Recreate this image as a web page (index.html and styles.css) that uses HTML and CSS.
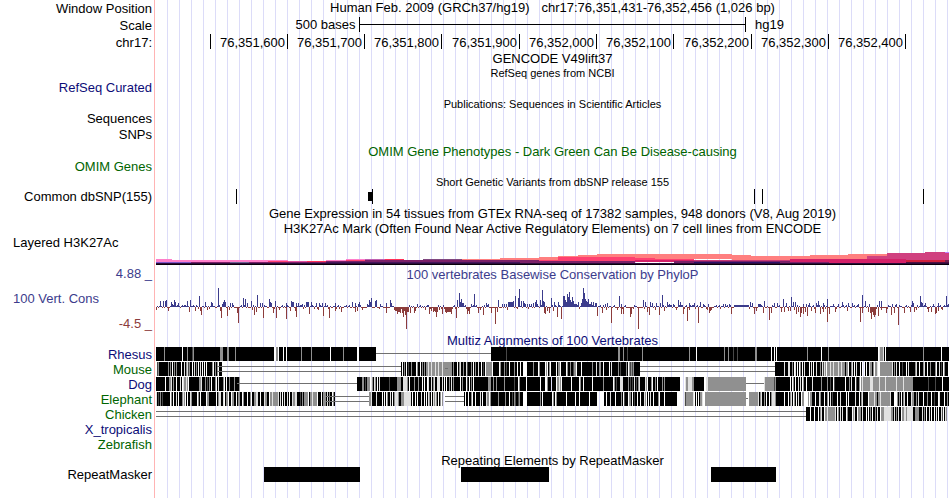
FILE: index.html
```html
<!DOCTYPE html>
<html lang="en">
<head>
  <meta charset="UTF-8">
  <title>Human chr17:76,351,431-76,352,456</title>
  <link rel="stylesheet" href="styles.css">
</head>
<body>
  <div class="browser">
    <div class="row position">
      <div class="label">Window Position</div>
      <div class="title"><span>Human Feb. 2009 (GRCh37/hg19)</span><span>chr17:76,351,431-76,352,456 (1,026 bp)</span></div>
    </div>
    <div class="row ruler">
      <div class="label">Scale</div>
      <svg class="plot" viewBox="156 0 793 17">
        <text x="355.5" y="12" text-anchor="end">500 bases</text>
        <path d="M359 0h1v7h385v-7h1v15h-1v-7h-385v7h-1z"/>
        <text x="755" y="12">hg19</text>
      </svg>
    </div>
    <div class="row ruler">
      <div class="label">chr17:</div>
      <svg class="plot" id="ruler" viewBox="156 0 793 17"></svg>
    </div>
    <div class="row"><div class="title">GENCODE V49lift37</div></div>
    <div class="row small h14"><div class="title">RefSeq genes from NCBI</div></div>
    <div class="row"><div class="label navy">RefSeq Curated</div></div>
    <div class="row small h16"><div class="title">Publications: Sequences in Scientific Articles</div></div>
    <div class="row"><div class="label">Sequences</div></div>
    <div class="row h16"><div class="label">SNPs</div></div>
    <div class="row h17"><div class="title green">OMIM Gene Phenotypes - Dark Green Can Be Disease-causing</div></div>
    <div class="row h14"><div class="label green">OMIM Genes</div></div>
    <div class="row small h16"><div class="title">Short Genetic Variants from dbSNP release 155</div></div>
    <div class="row">
      <div class="label">Common dbSNP(155)</div>
      <svg class="plot" viewBox="156 0 793 15">
        <path d="M236 0h1v15h-1zM368 3h4v-3h1v15h-1v-3h-4zM754 0h1v15h-1zM762 0h1v15h-1zM923 0h1v15h-1z"/>
      </svg>
    </div>
    <div class="row h17"><div class="title">Gene Expression in 54 tissues from GTEx RNA-seq of 17382 samples, 948 donors (V8, Aug 2019)</div></div>
    <div class="row"><div class="title">H3K27Ac Mark (Often Found Near Active Regulatory Elements) on 7 cell lines from ENCODE</div></div>
    <div class="row layered">
      <div class="label left">Layered H3K27Ac</div>
      <svg class="plot" id="h3k27ac" viewBox="156 236 793 29"></svg>
    </div>
    <div class="row cons">
      <div class="label axis">
        <span class="blue">4.88 _</span>
        <span class="blue left">100 Vert. Cons</span>
        <span class="red">-4.5 _</span>
      </div>
      <div class="cons-body">
        <div class="title blue">100 vertebrates Basewise Conservation by PhyloP</div>
        <svg class="plot" id="phylop" viewBox="156 282 793 51"></svg>
      </div>
    </div>
    <div class="row multiz"><div class="title navy">Multiz Alignments of 100 Vertebrates</div></div>
    <div class="row"><div class="label navy">Rhesus</div><svg class="plot" id="rhesus" viewBox="156 0 793 15"></svg></div>
    <div class="row"><div class="label green">Mouse</div><svg class="plot" id="mouse" viewBox="156 0 793 15"></svg></div>
    <div class="row"><div class="label navy">Dog</div><svg class="plot" id="dog" viewBox="156 0 793 15"></svg></div>
    <div class="row"><div class="label green">Elephant</div><svg class="plot" id="elephant" viewBox="156 0 793 15"></svg></div>
    <div class="row"><div class="label green">Chicken</div><svg class="plot" id="chicken" viewBox="156 0 793 15"></svg></div>
    <div class="row"><div class="label navy">X_tropicalis</div></div>
    <div class="row"><div class="label green">Zebrafish</div></div>
    <div class="row repeats"><div class="title">Repeating Elements by RepeatMasker</div></div>
    <div class="row">
      <div class="label">RepeatMasker</div>
      <svg class="plot" viewBox="156 0 793 15">
        <path d="M264 0h96v15h-96zM461 0h88v15h-88zM711 0h65v15h-65z"/>
      </svg>
    </div>
  </div>
  <script src="tracks.js"></script>
</body>
</html>
```

FILE: styles.css
```css
body {
  margin: 0;
  background: #fff;
  color: #000;
  font-family: "Liberation Sans", Arial, sans-serif;
  font-size: 13px;
  line-height: 15px;
}

.browser {
  width: 950px;
  height: 498px;
  overflow: hidden;
  /* red edge between labels and data, then a guide every 12px */
  background:
    linear-gradient(#ffb4b4, #ffb4b4) 154px 0 / 1px 100% no-repeat,
    repeating-linear-gradient(90deg, transparent 0 11px, #dcdcf8 11px 12px) 156px 0 / 794px 100% no-repeat;
}

.row {
  display: grid;
  grid-template-columns: 152px 793px;
  column-gap: 4px;
  height: 15px;
  align-items: end;
  white-space: nowrap;
}

.label {
  grid-column: 1;
  text-align: right;
}

.title,
.plot,
.cons-body {
  grid-column: 2;
}

.title {
  text-align: center;
}

.plot {
  display: block;
  width: 793px;
  height: 15px;
  shape-rendering: crispEdges;
}

.h14 { height: 14px; }
.h16 { height: 16px; }
.h17 { height: 17px; }

.small {
  box-sizing: border-box;
  padding-bottom: 1px;
  font-size: 11px;
  line-height: 12px;
}

.position {
  height: 17px;
  align-items: start;
}

.position .label,
.ruler .label {
  padding-top: 1px;
}

.position .title span + span {
  margin-left: 12px;
}

.ruler {
  height: 17px;
  align-items: start;
}

.ruler .plot {
  height: 17px;
}

.left {
  text-align: left;
  padding-left: 13px;
}

.layered {
  height: 29px;
  align-items: start;
}

.layered .label {
  margin-top: -1px;
}

.layered .plot {
  height: 29px;
}

.cons {
  height: 68px;
  align-items: start;
}

.axis {
  display: flex;
  flex-direction: column;
  gap: 10px;
  padding-top: 1px;
}

.cons-body {
  padding-top: 2px;
}

.cons-body .plot {
  height: 51px;
}

.multiz,
.repeats {
  height: 14px;
  align-items: start;
}

.repeats {
  padding-top: 1px;
}

.navy { color: #0c0c78; }
.green { color: #006400; }
.blue { color: #3c3c8c; }
.red { color: #8c3c3c; }
```

FILE: tracks.js
```js
const NS = 'http://www.w3.org/2000/svg';

function rect(svg, x, y, w, h, fill) {
  const r = document.createElementNS(NS, 'rect');
  r.setAttribute('x', x);
  r.setAttribute('y', y);
  r.setAttribute('width', w);
  r.setAttribute('height', h);
  r.setAttribute('fill', fill);
  svg.appendChild(r);
}

// ruler: tick every 100 bases, number to the left of its tick
const ruler = document.getElementById('ruler');
[210, 287, 364, 441, 519, 596, 673, 751, 828, 905].forEach((x, i) => {
  rect(ruler, x, 0, 1, 15, '#000');
  if (i === 0) return;
  const t = document.createElementNS(NS, 'text');
  t.setAttribute('x', x - 2);
  t.setAttribute('y', 13);
  t.setAttribute('text-anchor', 'end');
  t.textContent = (76351500 + i * 100).toLocaleString('en-US');
  ruler.appendChild(t);
});

// H3K27Ac layers: x1, x2, top, bottom, colour
const h3k = document.getElementById('h3k27ac');
[
  [156, 172, 259, 262, '#ff7fcb'], [172, 288, 260, 262, '#ff7fcb'],
  [156, 191, 262, 263, '#7d55c8'], [191, 230, 262, 263, '#7b2068'], [230, 249, 262, 263, '#6a6090'],
  [249, 326, 262, 263, '#7b2068'],
  [268, 288, 261, 262, '#ff4070'], [288, 326, 261, 262, '#e050a0'], [307, 326, 261, 262, '#ff3058'],
  [326, 346, 260, 261, '#ff7fcb'], [346, 365, 259, 260, '#ff7fcb'], [346, 385, 260, 261, '#ff4070'],
  [365, 385, 259, 260, '#c060b0'], [385, 404, 259, 260, '#ff3058'],
  [326, 365, 261, 263, '#7b2068'], [365, 423, 260, 263, '#7b2068'],
  [423, 462, 259, 260, '#804880'], [423, 500, 260, 263, '#7b2068'],
  [462, 500, 259, 260, '#ff7f7f'], [500, 539, 258, 261, '#ff7f7f'],
  [500, 539, 260, 263, '#7b2068'], [539, 558, 257, 260, '#ff7f7f'],
  [558, 578, 256, 259, '#ff7f7f'], [578, 597, 255, 258, '#ff7f7f'],
  [597, 732, 254, 259, '#ff7f7f'], [732, 751, 255, 260, '#ff7f7f'],
  [751, 810, 256, 260, '#ff7f7f'], [810, 848, 255, 260, '#ff7f7f'],
  [848, 887, 254, 259, '#ff7f7f'], [887, 906, 253, 255, '#ff7f7f'],
  [539, 558, 260, 262, '#ff4070'], [558, 635, 257, 262, '#ff4070'], [597, 655, 258, 262, '#ff4070'],
  [655, 694, 259, 262, '#ff4070'], [520, 635, 261, 263, '#7b2068'],
  [558, 635, 260, 261, '#ff4070'],
  [635, 732, 260, 262, '#d42068'], [694, 829, 260, 262, '#c83878'], [674, 740, 261, 263, '#7b2068'],
  [732, 829, 261, 263, '#7b2068'], [790, 868, 259, 262, '#d42068'],
  [829, 906, 259, 263, '#d42068'], [867, 887, 256, 259, '#d0407f'], [887, 906, 253, 258, '#d0407f'],
  [868, 906, 257, 259, '#d0407f'], [906, 925, 253, 260, '#d0407f'], [925, 949, 252, 260, '#d0407f'],
  [906, 945, 260, 262, '#d01f3c'], [945, 949, 260, 262, '#702050'], [945, 949, 252, 253, '#c080ff'],
  [906, 949, 262, 263, '#501040'],
  [156, 949, 263, 264, '#2c0b3c'], [326, 520, 262, 263, '#46165c'], [694, 780, 262, 263, '#2c1068'],
  [156, 949, 264, 265, '#080008']
].forEach(([x1, x2, y1, y2, c]) => rect(h3k, x1, y1, x2 - x1, y2 - y1, c));

// PhyloP scores, "x:height"
const gains = `160:6 163:6 165:6 166:7 171:5 172:3 174:7 175:5 178:4 187:6 190:7 199:11 205:5 211:5 212:4
218:19 222:3 223:5 224:7 225:5 230:4 232:4 243:9 245:8 247:4 251:6 257:12 260:4 262:4 269:8 270:5 271:4 275:6
286:4 291:6 292:5 293:5 296:4 298:4 302:3 306:5 307:5 308:5 311:5 316:4 319:4 322:4 325:4 335:4 352:5 355:4
358:3 359:5 367:3 369:7 370:5 371:9 375:6 376:7 380:3 386:4 390:7 391:4 417:3 457:7 459:14 460:5 461:8 462:4
463:4 471:3 474:13 486:4 488:3 498:7 502:3 504:3 506:3 508:5 509:5 510:5 511:5 512:5 513:6 515:11 518:9 519:18
521:6 523:6 524:4 525:3 527:3 529:3 531:3 533:4 535:5 536:7 537:3 540:7 542:17 543:6 544:5 551:9 554:5 558:5
563:11 564:11 565:7 566:5 567:13 568:10 569:15 570:7 571:5 572:10 573:6 574:3 575:3 576:3 578:5 581:4 582:8
583:19 584:14 585:8 586:6 587:5 588:8 589:3 590:3 591:5 593:5 595:4 596:4 605:3 607:4 619:11 621:3 643:7 645:5
650:5 652:4 656:4 660:4 662:12 667:5 669:3 673:3 678:7 680:5 689:4 694:4 700:5 703:3 708:3 723:3 725:3 729:3
750:5 752:4 758:3 759:3 760:3 764:6 774:4 777:4 783:8 786:4 791:10 793:5 795:5 803:3 806:3 809:4 816:4 818:6
823:4 827:8 833:3 838:3 842:5 848:4 852:4 858:3 862:12 865:6 869:3 879:6 881:6 892:3 896:3 912:6 913:4 920:11
921:5 922:4 925:4 933:3 938:4 946:11 948:3`;
const losses = `156:3 168:4 189:5 195:4 200:4 201:8 207:3 220:4 221:11 227:9 229:3 237:6 238:16 252:3 254:8 256:5
263:11 273:6 276:11 279:3 286:12 290:4 295:4 296:10 309:7 318:3 323:9 329:11 335:4 341:5 355:5 357:4 362:3
386:6 394:3 395:4 396:4 397:7 398:5 399:5 400:6 402:6 403:10 404:4 405:8 406:22 407:5 408:5 410:6 414:6 415:4
425:3 429:7 431:4 433:5 434:4 435:5 436:10 437:5 439:3 442:7 445:5 446:6 447:5 448:5 449:5 450:5 451:7 456:11
467:7 468:4 469:7 478:6 480:3 483:8 491:6 495:17 497:5 507:3 544:6 545:7 547:4 549:6 553:4 557:10 561:12 597:9
602:6 606:3 611:16 617:3 621:7 623:7 630:10 631:7 638:22 647:5 649:8 655:3 659:8 664:4 676:3 683:7 687:14
689:3 698:16 707:3 709:6 710:4 711:3 731:7 754:7 756:4 763:6 769:13 771:6 781:5 784:5 788:4 790:4 794:3 796:7
798:5 800:10 801:6 803:7 805:5 807:9 811:4 815:6 820:7 823:5 827:15 829:7 835:5 847:4 860:15 862:6 868:5
870:6 871:12 872:5 873:8 874:10 875:8 878:9 881:3 886:6 891:8 894:6 898:18 904:6 910:5 914:5 916:3 928:5
931:5 935:7 936:6 938:4 942:3`;

function parse(text) {
  return new Map(text.split(/\s+/).map(s => s.split(':').map(Number)));
}

const phylop = document.getElementById('phylop');
const up = parse(gains);
const down = parse(losses);
// low scores between the peaks
const low = 'aabrraabbrrabrrsarabrrarsbarraabrsarrba';
for (let x = 156; x < 949; x++) {
  const flat = x > 733 && x < 749;
  const c = flat ? 'b' : low[(x * 7 + (x >> 4)) % low.length];
  if (up.has(x)) rect(phylop, x, 307 - up.get(x), 1, up.get(x), '#3c3c8c');
  else if (!down.has(x) && (c === 'a' || c === 'b')) rect(phylop, x, c === 'a' ? 306 : 305, 1, c === 'a' ? 1 : 2, '#3c3c8c');
  if (down.has(x)) rect(phylop, x, 307, 1, down.get(x), '#8c3c3c');
  else if (!flat && !up.has(x) && (c === 'r' || c === 's')) rect(phylop, x, 307, 1, c === 'r' ? 1 : 2, '#8c3c3c');
}

// Alignments: "start:runs". K/D/G/L/W are shades, - is a gap, = an unaligned stretch
const shades = { K: '#000', D: '#484848', G: '#909090', L: '#e1e1e1', W: '#fff' };
const align = {
  rhesus: `156:K220 164:G 182:W 187:G 192:DG 220:G3 227:G2 235:G 274:W2G2W 283:W 286:W 301:G 311:G 330:W
    343:G 357:W2 376:-115 491:K458 506:D 618:G2 623:G 627:D 642:G 689:G 696:W 724:G 728:G 733:D 737:D
    755:G2 771:W 774:W 776:W 807:G 821:W 828:G 878:WLG3LKW 923:G 941:W`,
  mouse: `156:WDGK9GKGKWKGKGK4WK2LKGLDGK2WKLKGKWKLKWKWKWK5GWKGKGWK3
    217:=184 401:KWKGKWKDKKGK4WGKKWKGKGKG2LG2LG3LG2LG3LG5LGGL 445:-3
    448:G4KGK3WKGLK2GK2LDK3GKWKGK2LK2WKDKWGK5 487:G5WK6WGK3GKDKKWK4GK2WK2WKK
    524:W3K6GK4WGK4 544:KWGWKGWK5WKG2WKK4WGK2GK2DG2WK4WGK4WK2WKG
    582:K10GK3LK2G2K2WK5WKLK6GKDK5GKWGK2 630:DGDGK6 640:=135
    775:K9LK3L2K2GKWLKWKWGKWKLK4WKLKWK2LK3 820:GKLDLGWG3LG2LG4LG2LG3KG2WK2GLKWKLK3WKW
    865:KWK2LG2KGWG2L 880:G12LKGKLK2WK2DK3WKLK12 913:KKGLK2WK3GLK2WK2GK4GWK2LKDKWGK3`,
  dog: `156:K9WK3G2LKGK2WK3LKWLG2LGWK10G2LK3GKDKGKWK3GWKLK4GWKWK2GK4GK4G
    237:-120 357:K5G2KDKG3WLGKLGKWKLK9DK8 397:G4K2 403:L4GKWK4GK3GK3WKWK2WLK2LKGLK2L3K2LKWKWK2GKLKGK2GK7
    455:K5WKGK3WDKWKGKWKGK2W 475:K13G3K2GK2GK7GK9DK3WGK9 526:WK13WK4W2GK3 552:KKKKWGGLGWK9WKK
    572:K7WGK2WK8WK10GK9WGKDK3L3K5GK2GW 630:DKDKLKDKGLK5LGWKK2GWK2GKWK4GKGK15
    685:LG2L4G2KK9 706:L2G38 746:-18 764:LG9DGK 777:K13WKWGKWK2LKLKWGK2WKK4LK8GK5GK2DK2WDK5WKK
    840:K5WK3GKLK3WDK2GWGL 863:G7 870:L3G6LG5LG10LG6LG13 913:K36 928:D 935:D 942:W`,
  elephant: `156:LKDKGKDK7WGKWK2LKWK3GLGWKWK2LGK5WGKWK5WG2K7WKGL2K2LG
    224:WKG2WK2WG2KKWKG2KKWGK2KWK2GWK2G2LLK2WK3LG2K2WG2LG5LKLKWKLK2LKWKKLG2LLK5WG4KWGG
    300:DKGKG4WKG2LG4WK3WKG3KLKGK2WGK 326:=43 369:G2LK4LK5WKWKWGK2LKWKGL3GK2L
    401:G3L7KWK2WKWK3LK2WKWKLGKWKLGLGKWKGWG 445:=19 464:KWK2WK2GWK2WKK3LKWK3LG2WGK5G
    494:K4GK6GK3WK2DKGDK2DGK3 526:WK13GKWK8KWGKWGK9WK8WKK2WK9WK7
    604:KKWKK2LK4WK5GKWDK3WG2KWKDK2WKKWK3LGWKWKLKKWK4GWK4WK12
    684:LDG7LWKWKWKG2L 705:G41 746:-2 748:WG9LKGLK2GKWKKW 770:KGL3GK8WK3WKGLKWGKWKLK2WGGW
    808:GWG2K3WKKKLGK3WK2GWKLKDK4WK2LK5WKWK6LK3WKGLK5WGKKG 868:WG5LG2KG2LG9LK3
    897:GKGKWKGLK2WK3LG2K2GKLK4WK3GK3WK2DK3WLK4WK2GKW`,
  chicken: `156:=650 806:K4WKK2WK3WKGLK2WG2LG7LKWGKLKLK3WGKK3WGLK2WKLK2GKLK2WG2L
    858:G3KLKK2WKWKGKWK2GKLK2WG3LKWKG2L 885:L6GGKLKGKLKKWG2L2GL6K2G4KK2LKGKWKKLKWK2WKLKWK2LDWKLG`
};

for (const [id, text] of Object.entries(align)) {
  const svg = document.getElementById(id);
  for (const part of text.trim().split(/\s+/)) {
    const [start, runs] = part.split(':');
    let x = Number(start);
    for (const [, c, n] of runs.matchAll(/([KDGLW=-])(\d*)/g)) {
      const w = Math.min(Number(n) || 1, 949 - x);
      if (w <= 0) break;
      if (c === '-') {
        rect(svg, x, 6, w, 1, '#707070');
      } else if (c === '=') {
        rect(svg, x, 4, w, 1, '#707070');
        rect(svg, x, 9, w, 1, '#707070');
      } else {
        rect(svg, x, 0, w, 14, shades[c]);
      }
      x += w;
    }
  }
}
```
